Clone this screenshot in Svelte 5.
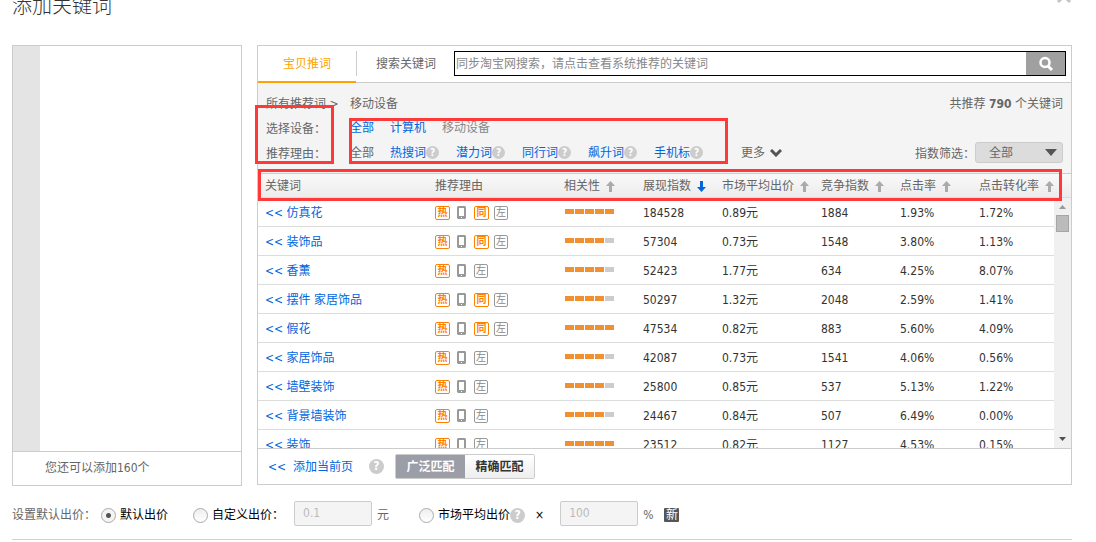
<script lang="ts">
  const reasons = ['热搜词', '潜力词', '同行词', '飙升词', '手机标'];

  const columns = [
    { key: 'score', label: '相关性' },
    { key: 'index', label: '展现指数', sorted: true },
    { key: 'price', label: '市场平均出价' },
    { key: 'rivals', label: '竞争指数' },
    { key: 'ctr', label: '点击率' },
    { key: 'cvr', label: '点击转化率' }
  ];

  const rows = [
    { word: '仿真花', peer: true, score: 5, index: 184528, price: '0.89', rivals: 1884, ctr: '1.93%', cvr: '1.72%' },
    { word: '装饰品', peer: true, score: 4, index: 57304, price: '0.73', rivals: 1548, ctr: '3.80%', cvr: '1.13%' },
    { word: '香薰', peer: false, score: 4, index: 52423, price: '1.77', rivals: 634, ctr: '4.25%', cvr: '8.07%' },
    { word: '摆件 家居饰品', peer: true, score: 4, index: 50297, price: '1.32', rivals: 2048, ctr: '2.59%', cvr: '1.41%' },
    { word: '假花', peer: true, score: 5, index: 47534, price: '0.82', rivals: 883, ctr: '5.60%', cvr: '4.09%' },
    { word: '家居饰品', peer: false, score: 4, index: 42087, price: '0.73', rivals: 1541, ctr: '4.06%', cvr: '0.56%' },
    { word: '墙壁装饰', peer: false, score: 4, index: 25800, price: '0.85', rivals: 537, ctr: '5.13%', cvr: '1.22%' },
    { word: '背景墙装饰', peer: false, score: 4, index: 24467, price: '0.84', rivals: 507, ctr: '6.49%', cvr: '0.00%' },
    { word: '装饰', peer: false, score: 5, index: 23512, price: '0.82', rivals: 1127, ctr: '4.53%', cvr: '0.15%' }
  ];

  let bidType = $state('default');
  let match = $state('broad');
</script>

{#snippet help(large = false)}
  <span class="help" class:large>?</span>
{/snippet}

<div class="dialog">
  <header class="title-bar">
    <h1>添加关键词</h1>
    <button class="close" aria-label="关闭">
      <svg width="16" height="16" viewBox="0 0 16 16"><path d="M2 2l12 12M14 2L2 14" stroke="#c4c4c8" stroke-width="3" /></svg>
    </button>
  </header>

  <main class="panels">
    <section class="picked">
      <div class="picked-list"><div class="gutter"></div></div>
      <div class="picked-foot">您还可以添加160个</div>
    </section>

    <section class="source">
      <div class="tabs">
        <button class="tab active">宝贝推词</button>
        <button class="tab second">搜索关键词</button>
        <form class="search" onsubmit={(e) => e.preventDefault()}>
          <input type="text" aria-label="搜索" placeholder="同步淘宝网搜索，请点击查看系统推荐的关键词" />
          <button aria-label="搜索">
            <svg width="16" height="16" viewBox="0 0 16 16" fill="none" stroke="#fff">
              <circle cx="7" cy="6.500" r="4.500" stroke-width="2.500" />
              <path d="M10 10l4 4" stroke-width="3" />
            </svg>
          </button>
        </form>
      </div>

      <div class="filters">
        <div class="line">
          <span class="label">所有推荐词 &gt;</span>
          <span>移动设备</span>
          <span class="right">共推荐 <b>790</b> 个关键词</span>
        </div>
        <div class="line">
          <span class="label">选择设备：</span>
          <div class="options">
            <a href="#all">全部</a>
            <a href="#pc">计算机</a>
            <span class="current">移动设备</span>
          </div>
        </div>
        <div class="line">
          <span class="label">推荐理由：</span>
          <div class="options">
            <span>全部</span>
            {#each reasons as reason}
              <span class="reason"><a href="#reason">{reason}</a>{@render help()}</span>
            {/each}
          </div>
          <button class="more">
            更多
            <svg width="12" height="8" viewBox="0 0 12 8" fill="none" stroke="#555" stroke-width="3"><path d="M1 1l5 5 5-5" /></svg>
          </button>
          <div class="right range">
            <label for="range">指数筛选：</label>
            <span class="select">
              <select id="range"><option>全部</option></select>
              <svg width="12" height="7" viewBox="0 0 12 7"><path d="M0 0h12L6 7z" fill="#555" /></svg>
            </span>
          </div>
        </div>
      </div>

      <div class="table-wrap">
        <table>
          <colgroup>
            <col /><col class="w-reason" /><col class="w-num" /><col class="w-num" />
            <col class="w-price" /><col class="w-num" /><col class="w-num" /><col class="w-last" />
          </colgroup>
          <thead>
            <tr>
              <th>关键词</th>
              <th>推荐理由</th>
              {#each columns as col (col.key)}
                <th>
                  {col.label}
                  <svg class="sort" class:sorted={col.sorted} width="9" height="11" viewBox="0 0 9 11"><path d="M4.500 0L9 5H6v6H3V5H0z" /></svg>
                </th>
              {/each}
            </tr>
          </thead>
          <tbody>
            {#each rows as row (row.word)}
              <tr>
                <td><a href="#add">&lt;&lt; {row.word}</a></td>
                <td>
                  <div class="marks">
                    <span class="mark hot">热</span>
                    <svg width="14" height="14" viewBox="0 0 14 14">
                      <path fill="#999" fill-rule="evenodd" d="M3 0h7l1 1v11l-1 1H3l-1-1V1zM4 2v8h5V2zM6 11v1h1v-1z" />
                    </svg>
                    {#if row.peer}<span class="mark hot">同</span>{/if}
                    <span class="mark">左</span>
                  </div>
                </td>
                <td>
                  <div class="score">
                    {#each [1, 2, 3, 4, 5] as n}
                      <i class:on={n <= row.score}></i>
                    {/each}
                  </div>
                </td>
                <td>{row.index}</td>
                <td>{row.price}元</td>
                <td>{row.rivals}</td>
                <td>{row.ctr}</td>
                <td>{row.cvr}</td>
              </tr>
            {/each}
          </tbody>
        </table>
        <div class="scrollbar">
          <svg width="7" height="4" viewBox="0 0 7 4"><path d="M0 4h7L3.500 0z" fill="#999" /></svg>
          <div class="thumb"></div>
          <svg width="7" height="4" viewBox="0 0 7 4"><path d="M0 0h7L3.500 4z" fill="#505050" /></svg>
        </div>
      </div>

      <div class="source-foot">
        <a href="#page">&lt;&lt;&nbsp; 添加当前页</a>
        {@render help(true)}
        <div class="match">
          <button class:on={match === 'broad'} onclick={() => (match = 'broad')}>广泛匹配</button>
          <button class:on={match === 'exact'} onclick={() => (match = 'exact')}>精确匹配</button>
        </div>
      </div>

      <div class="frame frame-labels"></div>
      <div class="frame frame-options"></div>
      <div class="frame frame-head"></div>
    </section>
  </main>

  <div class="bids">
    <span class="bids-label">设置默认出价：</span>
    <label><input type="radio" value="default" bind:group={bidType} />默认出价</label>
    <label class="custom"><input type="radio" value="custom" bind:group={bidType} />自定义出价：</label>
    <input class="amount" type="text" aria-label="自定义出价" value="0.1" disabled />
    <span class="unit">元</span>
    <label class="market"><input type="radio" value="market" bind:group={bidType} />市场平均出价</label>
    {@render help(true)}
    <span class="times">×</span>
    <input class="amount" type="text" aria-label="百分比" value="100" disabled />
    <span class="unit">%</span>
    <span class="new">新</span>
  </div>
</div>

<style>
  :global(body) {
    overflow: hidden;
    background: #fff;
  }

  .dialog {
    padding: 0 24px 0 12px;
    font: 12px/18px 'DejaVu Sans Condensed', 'Noto Sans CJK SC', sans-serif;
    color: #666;
  }

  button, input, select {
    font: inherit;
    color: inherit;
    box-sizing: border-box;
    margin: 0;
  }

  button {
    padding: 0;
    border: 0;
    background: none;
    cursor: pointer;
  }

  a {
    color: #0066dd;
    text-decoration: none;
  }

  .title-bar {
    display: flex;
    justify-content: space-between;
    height: 57px;
    margin-top: -12px;
  }

  h1 {
    margin: 0;
    font-size: 20px;
    font-weight: 300;
    line-height: 36px;
    color: #333;
  }

  .close {
    height: 16px;
    line-height: 0;
  }

  .panels {
    display: flex;
    gap: 15px;
  }

  .picked {
    display: flex;
    flex-direction: column;
    flex: 0 0 228px;
    margin-bottom: -1px;
    border: 1px solid #ccc;
  }

  .picked-list {
    display: flex;
    flex: 1;
  }

  .gutter {
    width: 27px;
    background: #e4e4e4;
  }

  .picked-foot {
    padding: 0 32px;
    border-top: 1px solid #ccc;
    line-height: 33px;
  }

  .source {
    position: relative;
    flex: 1;
    min-width: 0;
    border: 1px solid #ccc;
  }

  .tabs {
    display: flex;
    height: 36px;
    border-bottom: 1px solid #ccc;
  }

  .tab {
    flex: none;
  }

  .tab.active {
    width: 98px;
    height: 37px;
    border-bottom: 2px solid #ffa200;
    color: #ffa200;
  }

  .tab.second {
    height: 25px;
    margin-top: 5px;
    padding: 0 18px 0 19px;
    border-left: 1px solid #ccc;
  }

  .search {
    display: flex;
    flex: 1;
    height: 23px;
    margin: 5px;
    margin-left: 0;
    border: 1px solid #000;
  }

  .search input {
    flex: 1;
    padding: 0 1px;
    border: 0;
    outline: 0;
  }

  .search input::placeholder {
    color: #888;
  }

  .search button {
    width: 39px;
    background: #a0a0a0;
    line-height: 0;
  }

  .filters {
    padding: 8px 8px 7px;
    background: #f4f4f4;
  }

  .line {
    display: flex;
    align-items: center;
    height: 25px;
  }

  .label {
    width: 84px;
  }

  .right {
    margin-left: auto;
  }

  .options {
    display: flex;
    gap: 16px;
  }

  .current {
    color: #888;
  }

  .reason {
    display: flex;
    align-items: center;
    width: 50px;
  }

  .help {
    flex: none;
    width: 13px;
    height: 13px;
    border-radius: 50%;
    background: #ccc;
    color: #fff;
    font-size: 10px;
    font-weight: bold;
    line-height: 13px;
    text-align: center;
  }

  .help.large {
    width: 15px;
    height: 15px;
    font-size: 12px;
    line-height: 15px;
  }

  .more {
    display: flex;
    align-items: center;
    gap: 5px;
    margin-left: 37px;
  }

  .line .options,
  .more {
    padding-bottom: 2px;
  }

  .range {
    display: flex;
    align-items: center;
  }

  .select {
    position: relative;
    padding-bottom: 2px;
  }

  .select select {
    display: block;
    width: 88px;
    height: 21px;
    padding: 0 13px;
    appearance: none;
    border: 1px solid #ccc;
    border-radius: 3px;
    background: #dcdcdc;
  }

  .select svg {
    position: absolute;
    top: 7px;
    right: 6px;
    pointer-events: none;
  }

  .table-wrap {
    position: relative;
    height: 274px;
    overflow: hidden;
    border-top: 1px solid #ccc;
  }

  table {
    width: 100%;
    table-layout: fixed;
    border-collapse: separate;
    border-spacing: 0;
  }

  .w-reason { width: 129px; }
  .w-num { width: 79px; }
  .w-price { width: 99px; }
  .w-last { width: 92px; }

  th, td {
    box-sizing: border-box;
    height: 29px;
    padding: 2px 0 0;
    border-bottom: 1px solid #ddd;
    color: #333;
    text-align: left;
    white-space: nowrap;
  }

  th {
    height: 24px;
    padding: 0;
    background: linear-gradient(#f9f9f9, #ececec);
    color: #666;
    font-weight: normal;
  }

  th:first-child, td:first-child {
    padding-left: 7px;
  }

  .sort {
    margin-left: 3px;
    vertical-align: -2px;
    fill: #aaa;
  }

  .sort.sorted {
    fill: #0066dd;
    transform: rotate(180deg);
  }

  .marks {
    display: flex;
    align-items: center;
    gap: 5px;
  }

  .mark {
    width: 12px;
    height: 12px;
    border: 1px solid #999;
    border-radius: 2px;
    color: #888;
    font-size: 10px;
    line-height: 12px;
    text-align: center;
  }

  .mark.hot {
    width: 13px;
    border-color: #ff8000;
    color: #ff8000;
    font-weight: bold;
  }

  .score {
    display: flex;
    gap: 1px;
    padding: 0 0 4px 1px;
  }

  .score i {
    width: 9px;
    height: 5px;
    background: #ccc;
  }

  .score i.on {
    background: #f09030;
  }

  .scrollbar {
    position: absolute;
    top: 24px;
    right: 0;
    bottom: 0;
    display: flex;
    flex-direction: column;
    align-items: center;
    box-sizing: border-box;
    width: 17px;
    padding: 7px 0;
    background: #f0f0f0;
  }

  .thumb {
    box-sizing: border-box;
    width: 13px;
    height: 17px;
    margin: 6px 0 auto;
    border: 1px solid #a6a6a6;
    background: #bbb;
  }

  .source-foot {
    display: flex;
    align-items: center;
    height: 35px;
    padding-left: 10px;
    border-top: 1px solid #ccc;
  }

  .source-foot .help {
    margin: 0 11px 0 16px;
  }

  .match {
    display: flex;
    border: 1px solid #ccc;
    border-radius: 2px;
  }

  .match button {
    width: 69px;
    height: 23px;
    background: linear-gradient(#fff, #eee);
    color: #333;
    font-weight: bold;
  }

  .match button.on {
    background: #9b9ea6;
    color: #fff;
  }

  .frame {
    position: absolute;
    box-sizing: border-box;
    border: 3px solid #ff3838;
    pointer-events: none;
  }

  .frame-labels {
    top: 59px;
    left: -3px;
    width: 79px;
    height: 59px;
  }

  .frame-options {
    top: 72px;
    left: 91px;
    width: 379px;
    height: 46px;
  }

  .frame-head {
    top: 123px;
    right: 9px;
    left: 0;
    height: 32px;
  }

  .bids {
    display: flex;
    align-items: center;
    height: 48px;
    padding-top: 6px;
    border-bottom: 1px solid #ffd060;
    white-space: nowrap;
  }

  .bids label {
    display: flex;
    align-items: center;
    gap: 4px;
    margin-left: 5px;
    color: #000;
  }

  .bids label.custom {
    margin-left: 25px;
  }

  .bids label.market {
    margin-left: 30px;
  }

  .bids input[type='radio'] {
    width: 15px;
    height: 15px;
    appearance: none;
    border: 1px solid #aaa;
    border-radius: 50%;
    background: linear-gradient(#eee, #fff);
  }

  .bids input[type='radio']:checked {
    background: radial-gradient(circle, #555 2px, #f4f4f4 3px);
  }

  .amount {
    width: 78px;
    height: 25px;
    margin: 0 5px 4px 10px;
    padding: 0 8px;
    border: 1px solid #ccc;
    border-radius: 2px;
    background: #f4f4f4;
    color: #bbb;
  }

  .times {
    margin: 0 6px 0 10px;
    color: #000;
  }

  .new {
    width: 15px;
    margin-left: 11px;
    border-radius: 1px;
    background: #555;
    color: #fff;
    line-height: 14px;
    text-align: center;
  }
</style>
